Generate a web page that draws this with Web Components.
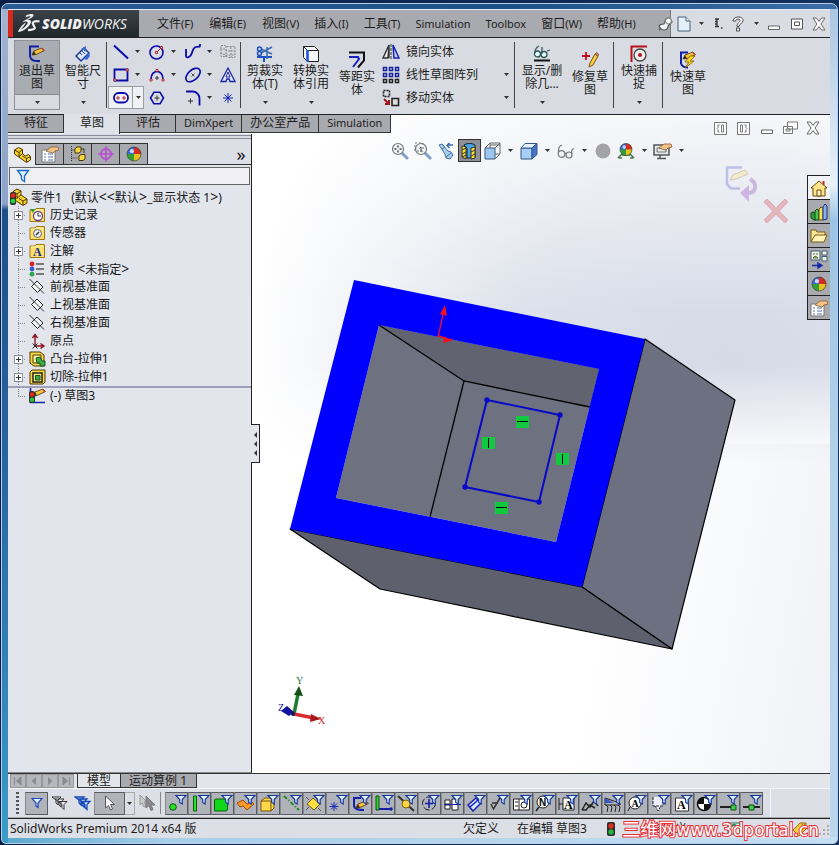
<!DOCTYPE html>
<html lang="zh-CN">
<head>
<meta charset="utf-8">
<title>SolidWorks Premium 2014</title>
<style>
html,body{margin:0;height:100%}
body{font:12px/14px "Noto Sans","Noto Sans CJK SC",sans-serif;color:#1c1c20;background:#0d2b57;overflow:hidden}
</style>
</head>
<body>
<sw-window></sw-window>
<script>
const BLUE = '#0a0aa8';
const funnel = '<path d="M9 1.500h10l-3.800 4v4.500l-2.500-1.500v-3z" fill="#e8f2ff" stroke="#14389c" stroke-width="1.200"/>';
const ball = (x, y, r) => `<circle cx="${x}" cy="${y}" r="${r}" fill="#30a030"/><path d="M${x} ${y}V${y-r}A${r} ${r} 0 0 0 ${x-r} ${y}z" fill="#3a64e0"/><path d="M${x} ${y}V${y-r}A${r} ${r} 0 0 1 ${x+r} ${y}z" fill="#d82a20"/><path d="M${x} ${y}V${y+r}A${r} ${r} 0 0 0 ${x+r} ${y}z" fill="#e8c020"/><circle cx="${x-r*.3}" cy="${y-r*.4}" r="${r*.3}" fill="#fff" opacity=".75"/><circle cx="${x}" cy="${y}" r="${r}" fill="none" stroke="#333" stroke-width=".6"/>`;
const plane = '<path d="M2.500 7.500L8 2l6 6-5.500 5.500z" fill="#f4f5f8" stroke="#222"/><path d="M.5 0L3.500 3M11.500 11l3.500 3.500M3.500 3l8 8" fill="none" stroke="#222" stroke-width=".9"/>';
const folder = '<path d="M1 3h5l1-1.500h8.500v13H1z" fill="#ffe06a" stroke="#a07810"/><path d="M2 4h4l1-1h7" stroke="#fff6b8" fill="none"/>';
const hand = '<path d="M5 6l5-4h7l1 3-4 1-2 2-4-1z" fill="#f2c48a" stroke="#8a5a28" stroke-width=".8"/>';
const pencil = (x, y) => `<g transform="translate(${x} ${y})"><path d="M0 7l2-4L10 0l2.500 2.500L4 6.500z" fill="#f6c93c" stroke="#5a3c10" stroke-width=".9"/><path d="M0 7l2-4 2 3.500z" fill="#3a2a18"/><path d="M10 0l2.500 2.500-1.200.8L9 .7z" fill="#d04840"/></g>`;
const sq = (x, y) => `<path d="M${x-1} ${y-1}h2v2h-2z" fill="#fff" stroke="#b01020" stroke-width=".9"/>`;
const glass = '<path d="M11 11l5 5" stroke="#7fa0cc" stroke-width="3" stroke-linecap="round"/><circle cx="7" cy="7" r="5.500" fill="#f3f4f6" stroke="#777" stroke-width="1.200"/>';
const ICONS = {
 ds:[24,24,'<path d="M9 3.500c4-2 8-2 7.500 0-.3 1.800-4 3.500-6 4.500 3-.3 4.500.8 3 3.500-2 4-7 8-12.500 8.500 1-3 4-7.500 8-9.500-1.500 3-4 6-5.500 7 4-1 7-5 7.200-7.200-1.200-1.600-4-.6-5.500.2 2-2.500 6-3.500 8.500-6-1.500-.4-3 .2-5 .9z" fill="#eee"/><path d="M22.500 9.500c-3.500-1.200-7.500.2-6.500 2.800.8 1.700 2.600 3 1.500 4.300-1.200 1.300-4.500 1.500-6.500 1.600" fill="none" stroke="#eee" stroke-width="2.200"/>'],
 pin:[16,16,'<path d="M2 14l4-4" stroke="#555" stroke-width="1.500"/><path d="M2 10c1-2 3-2 5-2l2-5c2-2 6 0 6 3l-4 4c0 3-2 4-4 4-3 0-4-2-5-4z" fill="#f4f4f6" stroke="#555" stroke-width="1.200"/><circle cx="11.500" cy="5" r="3" fill="#fff" stroke="#777"/>'],
 doc:[14,16,'<path d="M1 1h8l4 4v10H1z" fill="#e4f0fa" stroke="#45617c"/><path d="M9 1v4h4" fill="#fff" stroke="#45617c"/>'],
 more:[10,14,'<path d="M2 2h4M2 4.500h2M2 7h2M2 9.500h4M4 2v8M8 11h1.500" stroke="#333" stroke-width="1.300"/>'],
 help:[14,16,'<path d="M2 5c0-5 10-5.500 10-.5 0 3-4 3-4 6H6c0-4 3-4 3-6 0-2-4-2-4.200.5zM5.500 12h3v3h-3z" fill="#fff" stroke="#444"/>'],
 min:[14,14,'<path d="M1.500 9h11v3.500h-11z" fill="#fff" stroke="#666"/>'],
 max:[14,14,'<path d="M1.500 2h11v10h-11zM4.500 5h5v3.500h-5z" fill="#fff" stroke="#555"/>'],
 close:[14,14,'<path d="M1 1h3.500L7 4.500 9.500 1H13L9 7l4 6H9.500L7 9.500 4.500 13H1l4-6z" fill="#fff" stroke="#666"/>'],
 restore:[16,14,'<path d="M5.500 1h10v7h-10zM1.500 5.500h9v7h-9z" fill="#fff" stroke="#777"/><path d="M4 8h4v2H4z" fill="none" stroke="#777"/>'],
 paneL:[13,13,'<path d="M.5.500h12v12H.5zM7.500 3h2v7h-2z" fill="#fff" stroke="#777"/><path d="M5.500 3H4v2.500L3 6.500l1 1V10h1.500" fill="#fff" stroke="#777"/>'],
 paneR:[13,13,'<path d="M.5.500h12v12H.5zM3.500 3h2v7h-2z" fill="#fff" stroke="#777"/><path d="M7.500 3H9v2.500l1 1-1 1V10H7.500" fill="#fff" stroke="#777"/>'],
 exit:[18,18,'<path d="M11 1.500H2v10c1 3 3 4.500 6 4.500h4" fill="none" stroke="#1020a0" stroke-width="2"/>'+pencil(4,3)],
 dim:[18,18,'<path d="M2 11l8-8 5 5-8 8z" fill="#dbe6fa" stroke="#1c3c9c" stroke-width="1.500"/><path d="M6 8l2 2M8 6l3 3M10 5l1.500 1.500" stroke="#1c3c9c"/><path d="M7 4l5-3v4zM10 14l5-6 1 3-3 4z" fill="#3868d8"/>'],
 line:[16,16,`<path d="M1 1.500l14 13" stroke="${BLUE}" stroke-width="2"/>`],
 circle:[16,16,`<circle cx="7.500" cy="8.500" r="6.500" fill="none" stroke="${BLUE}" stroke-width="1.600"/><path d="M8 8l4-4" stroke="#b01020"/>${sq(7.500,8.500)}${sq(12.500,3.500)}`],
 spline:[18,18,`<path d="M2 6v7c0 2 3 2 5-1S8 5 12 4s4 1 4-3" fill="none" stroke="${BLUE}" stroke-width="1.800"/>`],
 grid:[18,16,'<path d="M2 1.500h4l1 1h9v11H9l-1-1H2zM1 5h5l2 2h8M1 9l6 2h9M7 2v11M12 3v10" fill="none" stroke="#888" stroke-dasharray="2 1"/>'],
 rect:[16,14,`<path d="M1.500 1.500h13v11h-13z" fill="none" stroke="${BLUE}" stroke-width="1.800"/>${sq(14,2)}${sq(2,12)}`],
 arc:[16,14,`<path d="M2 11c0-10 12-10 12 0" fill="none" stroke="${BLUE}" stroke-width="1.600"/>${sq(2,12)}${sq(14,12)}${sq(8,2.500)}<path d="M6 10h4M8 8v4" stroke="#333"/>`],
 ellipse:[18,16,`<ellipse cx="9" cy="8" rx="8.500" ry="5" transform="rotate(-42 9 8)" fill="none" stroke="${BLUE}" stroke-width="1.600"/><path d="M7.500 6.500l3 3M10.500 6.500l-3 3" stroke="#555"/>`],
 textA:[16,16,'<path d="M8 1l7 13.500h-5l-.8-2.500H6.800L6 14.500H1z" fill="#dde6fb" stroke="#1c28a4" stroke-width="1.300"/><path d="M8 5l2 5H6z" fill="#fff" stroke="#1c28a4"/>'],
 slot:[16,12,`<rect x="1" y="1" width="14" height="9.500" rx="4.500" fill="none" stroke="${BLUE}" stroke-width="1.800"/>${sq(5,6)}${sq(11,6)}`],
 hex:[16,14,`<path d="M5 1.200h6l3.500 5.800-3.500 5.800H5L1.500 7z" fill="none" stroke="${BLUE}" stroke-width="1.600"/><path d="M5.500 7h5M8 4.500v5" stroke="#333"/>`],
 fillet:[18,16,`<path d="M2 1.500h7c4 0 6.500 4 6.500 7v7" fill="none" stroke="${BLUE}" stroke-width="1.800"/><path d="M4 11h5M6.500 8.500v5" stroke="#333"/>`],
 star:[12,12,'<path d="M6 1v10M1 6h10M2.500 2.500l7 7M9.500 2.500l-7 7" stroke="#1420b0"/>'],
 trim:[18,18,'<path d="M1 12h15M8 12v5" stroke="#1c50c0" stroke-width="2"/><path d="M5 8l11-6M5 4l11 5M11 2v12" stroke="#3a6ab0" stroke-width="1.500"/><circle cx="3.500" cy="4" r="2" fill="none" stroke="#1c50c0" stroke-width="1.500"/><circle cx="3.500" cy="8.500" r="2" fill="none" stroke="#1c50c0" stroke-width="1.500"/>'],
 convert:[18,18,'<path d="M1.500 1.500h11l4 4v11h-11l-4-4zM5.500 5.500h11M1.500 1.500l4 4" fill="#f5f7fb" stroke="#222"/><path d="M5.500 5v11.500" stroke="#1c50e0" stroke-width="2.500"/>'],
 offset:[18,18,'<path d="M1 1.500h15v8l-6 7" fill="none" stroke="#111" stroke-width="2"/><path d="M1 6h9l1 2-6 8" fill="none" stroke="#1420c0" stroke-width="2"/>'],
 mirror:[18,16,'<path d="M7 1L1 14h5zM7 1v13" fill="#eee" stroke="#333" stroke-width="1.400"/><path d="M11 1l6 13h-5z" fill="#c9d4ff" stroke="#1420b0" stroke-width="1.500"/><path d="M9 0v16" stroke="#333" stroke-dasharray="3 1"/>'],
 pattern:[18,18,[0,1,2].map(r=>[0,1,2].map(c=>`<path d="M${1.500+c*6} ${1.500+r*6}h3v3h-3z" fill="#dce2f4" stroke="${r<2?'#1420a0':'#222'}" stroke-width="1.500"/>`).join('')).join('')],
 move:[18,18,'<path d="M1.500 1.500h6v6h-6z" fill="none" stroke="#222" stroke-width="1.600" stroke-dasharray="2 1"/><path d="M2 10l5 5M7 11v4H3" stroke="#a01818" stroke-width="2" fill="none"/><path d="M10 9.500h6.500v7H10z" fill="#ddd" stroke="#222" stroke-width="1.600"/>'],
 show:[18,18,'<circle cx="4.500" cy="9" r="3" fill="#dff" stroke="#355" stroke-width="1.300"/><circle cx="11" cy="9.500" r="3" fill="#dff" stroke="#355" stroke-width="1.300"/><path d="M2 8c0-4 2-6 4-7M9 2v7M14 6l3-1" stroke="#355" fill="none" stroke-width="1.300"/><path d="M1 15.500h16" stroke="#111" stroke-width="2"/>'],
 repair:[18,18,'<path d="M1 5h8M5 1v8" stroke="#c01020" stroke-width="1.800"/><path d="M8 16l1-4 5-9 3 2-5 9z" fill="#f8d040" stroke="#7a5010"/><path d="M14 3l3 2 .5-2-2-1.500z" fill="#e08080" stroke="#7a5010" stroke-width=".7"/>'],
 snap:[18,18,'<path d="M1.500 17V1.500H17" fill="none" stroke="#b81018" stroke-width="2"/><circle cx="10" cy="10" r="6" fill="#eee" stroke="#444" stroke-width="1.300"/><circle cx="10" cy="10" r="2" fill="#c01020"/>'],
 rapid:[18,18,'<path d="M9 1.500H2v11c1 3 4 4 7 4" fill="none" stroke="#1020a0" stroke-width="2"/>'+pencil(4,1)+'<path d="M11 5l-5 6h4l-4 6 9-7h-4l5-5z" fill="#ffd820" stroke="#7a5a00" stroke-width=".8"/>'],
 part:[18,18,'<path d="M1.500 4l4-2.500 4 2v4.500l3 2 3-1.500 2 2v3.500l-4 2.500L1.500 8z" fill="#f8d030" stroke="#4a3800"/><path d="M1.500 4l4.500 2.500 3.500-3M6 6.500V11M9 8l-3 2.500M13.500 16v-3.500l4-2M13.500 12.500L9.500 10" fill="none" stroke="#4a3800"/>'],
 prop:[18,18,'<path d="M1 5h13v12H1z" fill="#fff" stroke="#777"/><path d="M3 9h2M7 9h5M3 12h2M7 12h5M3 15h2M7 15h5" stroke="#5070b0"/>'+hand],
 config:[18,18,'<path d="M2.500 1v16M2.500 5H7M2.500 13H9" stroke="#333" fill="none" stroke-dasharray="1 1"/><path d="M6 3.500L8 2h4v4.500L10 8H6zM10 11l2-1.500h4V14l-2 1.500h-4z" fill="#f8d840" stroke="#4a3800"/><path d="M12 4h3v4" fill="none" stroke="#333"/>'],
 target:[18,18,'<circle cx="9" cy="9" r="5" fill="none" stroke="#b850d0" stroke-width="2"/><path d="M9 1v16M1 9h16" stroke="#b850d0" stroke-width="1.600"/>'],
 ball:[18,18,ball(9,9,7)],
 funnel:[14,14,'<path d="M1.500 1.500h11L8.500 7v5.500l-3-2V7z" fill="#d9efff" stroke="#1668c8" stroke-width="1.300"/>'],
 funnelS:[12,12,'<path d="M1 1.500h10L7 6v4.500L5 9V6z" fill="#e4eeff" stroke="#1c48b8" stroke-width="1.200"/>'],
 root:[18,18,'<path d="M3 3.500L7 1l4 2v4l3 2 3 2v4l-4 2.500-9-6z" fill="#f8d030" stroke="#4a3800"/><path d="M3 3.500L7 6l4-3M7 6v5M11 7l-4 3M13 17v-4l4-2M13 13L9 10.500" fill="none" stroke="#4a3800"/><rect x="0" y="4" width="6" height="13" rx="2" fill="#333"/><circle cx="3" cy="7.500" r="2.300" fill="#f02818"/><circle cx="3" cy="13" r="2.300" fill="#20d838"/>'],
 history:[17,16,folder+'<circle cx="9" cy="9" r="4.500" fill="#fff" stroke="#6a4090" stroke-width="1.300"/><path d="M9 6v3h3" stroke="#333" fill="none"/><path d="M1 2h5L4 6z" fill="#28a030"/>'],
 sensor:[17,16,folder+'<circle cx="8.500" cy="8.500" r="4" fill="#eef" stroke="#666"/><path d="M7 10l3-3" stroke="#333" stroke-width="1.400"/>'],
 note:[17,16,folder+'<text x="4" y="13" font-size="12" font-weight="700" font-family="Liberation Serif" fill="#14309c">A</text>'],
 material:[17,16,'<path d="M7 3h8M7 8h8M7 13h8" stroke="#555" stroke-width="1.600"/><circle cx="3" cy="3" r="2.400" fill="#d82028"/><circle cx="3" cy="8" r="2.400" fill="#3858d0"/><circle cx="3" cy="13.200" r="2.400" fill="#28a848"/>'],
 plane:[17,16,plane],
 origin:[17,16,'<path d="M6 13V2M3.500 5L6 1.500 8.500 5M6 13h8M11.500 10.500L15 13l-3.500 2.500" stroke="#8c1420" stroke-width="1.400" fill="none"/><path d="M3.500 10.500l5 5M8.500 10.500l-5 5" stroke="#222"/>'],
 boss:[17,16,'<path d="M1 1h10l4 3v11H5l-4-3z" fill="#f8d848" stroke="#4a3800"/><path d="M4 4h8v8H4z" fill="#fff2a0" stroke="#4a3800"/><path d="M7 7l4-1 2 4h3v5h-5v-3H8z" fill="#3cb048" stroke="#145020"/>'],
 cut:[17,16,'<path d="M1 3l2-2h13v12l-2 2H1z" fill="#f8d848" stroke="#4a3800"/><path d="M4 4h9v9H4z" fill="#ffe880" stroke="#222" stroke-width="1.500"/><path d="M6.500 6.500h4.500V11H6.500z" fill="#3cb048" stroke="#145020"/>'],
 sketch3:[17,16,'<path d="M1.500 0v14.500H16" stroke="#1428a8" stroke-width="1.600" fill="none"/>'+pencil(4,1)+'<rect x="0" y="3" width="6" height="12" rx="2" fill="#333"/><circle cx="3" cy="6.500" r="2.200" fill="#e82818"/><circle cx="3" cy="11.700" r="2.200" fill="#20c838"/>'],
 zoomFit:[18,18,glass+'<path d="M7 3.500v2M7 8.500v2M3.500 7h2M8.500 7h2" stroke="#444" stroke-width="1.500"/>'],
 zoomArea:[18,18,glass+'<path d="M1 1h8v8H1z" fill="none" stroke="#777" stroke-dasharray="2 2"/><path d="M7 5v5M5.500 6.500L7 5" stroke="#444" fill="none"/>'],
 prev:[18,18,'<path d="M2 3l3-1 6 7 3 1 2 3-3 4-4-1-1-4z" fill="#a8cfee" stroke="#4070a0"/><path d="M5 7l3-2M9 15l5-4" stroke="#4070a0"/><path d="M16 3h-6M12.500 1L10 3.500 12.500 6" stroke="#3868b0" stroke-width="1.500" fill="none"/>'],
 section:[18,18,'<path d="M4 3c3-2 8-2 11 0v12c-2-2-3-1-3 1H7V6z" fill="#4aa4e0" stroke="#123"/><path d="M2 4l4 1v12l-4-2zM11 6l4-1v11l-4 1z" fill="#ffe030" stroke="#333"/><path d="M2 8l4-2M2 12l4-2M2 15l4-2M11 10l4-2M11 14l4-2" stroke="#333"/>'],
 orient:[18,18,'<path d="M2 6h10v11H2z" fill="#9cc8f0" stroke="#3a5a80"/><path d="M2 6l5-5h10v11l-5 5M7 1v5M12 6l5-5M12 12h5M7 3h10" fill="none" stroke="#666"/>'],
 style:[18,18,'<path d="M1 6h11v11H1z" fill="#a8d0f6" stroke="#35558a"/><path d="M1 6l4-4.500h12L12 6z" fill="#e4f2ff" stroke="#35558a"/><path d="M17 1.500v11L12 17V6z" fill="#4a72c8" stroke="#35558a"/>'],
 glasses:[18,18,'<circle cx="4.500" cy="12" r="3.300" fill="#eef4f8" stroke="#777" stroke-width="1.200"/><circle cx="12" cy="13" r="3" fill="#eef4f8" stroke="#777" stroke-width="1.200"/><path d="M1.500 10C1 6 3 3 5 3.500M8 11l1 1M15 12c-1-3 0-5 2-5.500" fill="none" stroke="#777" stroke-width="1.200"/>'],
 grey:[18,18,'<circle cx="9" cy="9" r="7.500" fill="#a4a4a8"/>'],
 scene:[18,18,'<path d="M1 16l4-4M17 16l-4-4M5 13h8M2 16h3M13 16h3" stroke="#4a7a4a" stroke-width="1.600"/>'+ball(9,7.500,6)],
 view:[20,18,'<path d="M1 3h15v10H1z" fill="#e4e8ee" stroke="#555" stroke-width="1.500"/><path d="M4 6h9v4H4z" fill="none" stroke="#777"/><path d="M7 13v3M4 16.500h9" stroke="#555" stroke-width="1.500"/><g transform="translate(1 0)">'+hand+'</g>'],
 home:[18,18,'<path d="M1 9l8-7 8 7h-2v8H3V9z" fill="#ffe68a" stroke="#6a4a08"/><path d="M7 11h4v6H7z" fill="#fff6c8" stroke="#6a4a08"/><path d="M12.500 2v3l2 1.500V2z" fill="#c03020"/>'],
 lib:[18,18,'<path d="M1 10l2-1 3 1v7H4l-3-2z" fill="#2c9c34" stroke="#124a18"/><path d="M5 8l2-2 2 2v9H5z" fill="#4cc054" stroke="#124a18"/><path d="M9 6l2-2 2 1v12H9z" fill="#f8e060" stroke="#5a4808"/><path d="M13 4l2-3 2 2v13l-4 1z" fill="#8ab0ee" stroke="#1a3478"/>'],
 open:[18,18,'<path d="M1 15V3h5l1 2h8v3" fill="#ffe89a" stroke="#7a5a10"/><path d="M1 15l4-7h12l-3 7z" fill="#fff3b8" stroke="#7a5a10"/>'],
 palette:[18,20,'<path d="M1 1h9v9H1zM12 1h5v4h-5zM12 6.500h5V11h-5z" fill="#eef6e0" stroke="#445c80"/><path d="M3 4h2M6 4h2M3 8l2-2 3 2z" stroke="#487040" fill="#d8d040"/><path d="M2 15.500h6M8 13l4 2.500L8 18z" stroke="#1428a8" stroke-width="1.400" fill="#1428a8"/>'],
 confirm:[34,40,'<path d="M18 2.500H3v17l4 4h9" fill="none" stroke="#bcc0e6" stroke-width="2.500"/><path d="M6 15l3-5 12-5 3 4-12 5z" fill="#f4ebc8" stroke="#cfc8c0"/><path d="M26 14c7 4 7 13-1 14" stroke="#c8b8e0" stroke-width="4" fill="none"/><path d="M16 28l9-8v17z" fill="#d0b4e4"/>'],
 cancel:[24,24,'<path d="M3 3l18 18M21 3L3 21" stroke="#dba9b2" stroke-width="5" stroke-linecap="square"/><path d="M3 3l18 18M21 3L3 21" stroke="#e4b8be" stroke-width="3" stroke-linecap="square"/>'],
 first:[16,14,'<path d="M4.500 3v8M11 3L6.500 7l4.500 4z" fill="#8a8b90" stroke="#8a8b90"/>'],
 prior:[16,14,'<path d="M10 3L5.500 7l4.500 4z" fill="#8a8b90"/>'],
 next:[16,14,'<path d="M6 3l4.500 4L6 11z" fill="#8a8b90"/>'],
 last:[16,14,'<path d="M11.500 3v8M5 3l4.500 4L5 11z" fill="#8a8b90" stroke="#8a8b90"/>'],
 funnels:[18,16,'<path d="M1 2h9L7 5v5L5 8V5zM4 4h9l-3 3v5l-2-2V7zM7 6.500h9l-3 3v5l-2-2v-3z" fill="#f4f4f4" stroke="#333"/>'],
 funnelsB:[18,16,'<path d="M1 2h9L7 5v5L5 8V5zM4 4h9l-3 3v5l-2-2V7zM7 6.500h9l-3 3v5l-2-2v-3z" fill="#d4e8ff" stroke="#1448b8" stroke-width="1.300"/>'],
 cursor:[12,16,'<path d="M1.500 1v12l3-2.500 2 4.500 2-1-2-4.500h4z" fill="#fff" stroke="#555"/>'],
 cursorG:[18,18,'<path d="M2 1v10l2-2 2 4 2-1-2-4h3z" fill="#ccc" stroke="#999"/><path d="M8 2v12l3-2.500 2 5 2-1-2-4.500h4z" fill="#888a90" stroke="#777"/>'],
 light:[12,14,'<rect x="2" y="0" width="8" height="14" rx="2" fill="#2c2c2c"/><circle cx="6" cy="4" r="2.700" fill="#d83020"/><circle cx="6" cy="10" r="2.700" fill="#28b040"/>'],
 ask:[14,14,'<path d="M1 1h12v11H1z" fill="#d8f4e0" stroke="#1c6a50"/><path d="M5 5c0-3 4-3 4-.5C9 6 7 6 7 8M7 9.500v1.500" stroke="#18704c" stroke-width="1.500" fill="none"/>'],
 tag:[16,16,'<path d="M1 9l7-7h6v6l-7 7z" fill="#f8cc38" stroke="#9a7010"/><circle cx="11.500" cy="4.500" r="1.500" fill="#fff" stroke="#9a7010"/>'],
 size:[12,12,'<path d="M9 2h2v2H9zM9 6h2v2H9zM9 10h2v2H9zM5 6h2v2H5zM5 10h2v2H5zM1 10h2v2H1z" fill="#aaadb5"/>'],
};
const FILTERS = [
 ['顶点','<circle cx="6" cy="13" r="3.300" fill="#28e028" stroke="#0a5a0a"/>'],
 ['边线','<path d="M3.500 2h3v15h-3z" fill="#30e030" stroke="#0a5a0a"/>'],
 ['面','<path d="M1.500 6l1-1h12v10l-1 2h-12z" fill="#10d818" stroke="#0a600a"/>'],
 ['曲面','<path d="M1 9l6-3 4 4 5-2 2 2-7 6-4-4-3 1z" fill="#f89828" stroke="#a04808"/>'],
 ['实体','<path d="M2 7l4-3h9v10l-3 3H2z" fill="#ffd84a" stroke="#7a5008"/><path d="M2 7h10v10M12 7l3-3" fill="none" stroke="#7a5008"/>'],
 ['基准轴','<path d="M2 2l15 14" stroke="#1c8a28" stroke-width="2" stroke-dasharray="4 2 1 2"/>'],
 ['基准面','<path d="M2 10l6-6 7 6-6 6z" fill="#ffe040" stroke="#6a5808"/><path d="M1 3l3 3M13 14l3 3M1 16l3-3" stroke="#555"/>'],
 ['草图点','<path d="M6 8v9M1.500 12.500h9M3 9.500l6 6M9 9.500l-6 6" stroke="#1828b8"/>'],
 ['草图','<path d="M10 4H3v8c1 4 6 4 10 4" stroke="#1420a8" stroke-width="2" fill="none"/>'+pencil(5,7)],
 ['草图线段','<path d="M2 2h3v14H2z" fill="#30d030" stroke="#0a500a"/><path d="M5 15h12" stroke="#1420a8" stroke-width="2"/><circle cx="17" cy="15" r="1.800" fill="#1420a8"/>'],
 ['中点','<path d="M1 2l16 15" stroke="#333" stroke-width="2"/><circle cx="9" cy="10" r="4" fill="#ffd840" stroke="#806008"/>'],
 ['中心符号','<circle cx="9" cy="9.500" r="6.500" fill="none" stroke="#222" stroke-dasharray="7 2"/><path d="M5 9.500h8M9 5v9" stroke="#1420a8" stroke-width="1.600"/>'],
 ['中心线','<path d="M2 6h5v4H2zM2 11h5v4H2zM9 5h6v11H9z" fill="#fff" stroke="#222"/><path d="M1 10.500h17" stroke="#1420a8"/>'],
 ['尺寸','<path d="M2 11l8-7 5 5-8 8z" fill="#d8e4ff" stroke="#1420b0" stroke-width="1.500"/><path d="M4 13l8-7" stroke="#1420d0" stroke-width="1.600"/>'],
 ['表面粗糙度','<path d="M2 10l2.500 5L11 4M3 9h6" stroke="#333" stroke-width="1.500" fill="none"/>'],
 ['形位公差','<path d="M1.500 5h16v11h-16zM7 5v11" fill="#fff" stroke="#222"/><path d="M3 8h3M3 12h3" stroke="#222"/><circle cx="12" cy="11" r="3" fill="none" stroke="#222"/>'],
 ['注释','<circle cx="8" cy="8" r="6" fill="#fff" stroke="#222"/><path d="M4 13l-3 4" stroke="#222" stroke-width="1.500"/><text x="4" y="12" font-size="10" font-weight="700" font-family="Liberation Sans">N</text>'],
 ['基准特征','<path d="M5 4h11v12H5zM1 4v12M1 10h4" fill="#fff" stroke="#222"/><text x="6" y="14.500" font-size="12" font-weight="700" font-family="Liberation Serif">A</text>'],
 ['焊接','<path d="M1 16L5 9l4 4 4-6 4 5M1 16h4l4-5 5 3" stroke="#222" stroke-width="1.500" fill="none"/>'],
 ['毛虫','<path d="M1 4l15 5v2H1zM2 11l2 2-1 5M6 11l2 2-1 5M10 11l2 2-1 5M14 11l2 2-1 5" stroke="#222" fill="none"/><path d="M1 4l9 5H1z" fill="#3858c0"/>'],
 ['基准目标','<circle cx="8" cy="9" r="6" fill="#fff" stroke="#222"/><text x="4.500" y="13" font-size="10" font-weight="700" font-family="Liberation Serif">A</text><path d="M3 13l-2 4" stroke="#222"/>'],
 ['装饰螺纹线','<path d="M3 3v9h1l4 5 4-5h1V3" fill="#eef"/><path d="M3 3v9h10V3M5 12l3 5 3-5" stroke="#222" stroke-dasharray="3 1" fill="none"/>'],
 ['块','<path d="M2.500 4h13v13h-13z" fill="#fff" stroke="#333"/><text x="4" y="15" font-size="12" font-weight="700" font-family="Liberation Serif">A</text>'],
 ['销钉符号','<circle cx="8" cy="10" r="6.500" fill="#fff" stroke="#111" stroke-width="1.500"/><path d="M8 10V3.500a6.500 6.500 0 0 0-6.500 6.500zM8 10v6.500a6.500 6.500 0 0 0 6.500-6.500z" fill="#111"/>'],
 ['连接点','<path d="M1 13h12" stroke="#111" stroke-width="1.800"/><path d="M12 11h5v5h-5z" fill="#40d050" stroke="#0a500a"/>'],
 ['步路点','<path d="M1 13h17" stroke="#111" stroke-width="1.800"/><path d="M7 11h5v5H7z" fill="#40d050" stroke="#0a500a"/>'],
];
FILTERS.forEach((f, i) => { ICONS['f' + i] = [20, 18, f[1] + funnel]; });

const RESET = '<style>*,:host{box-sizing:border-box}:host{display:block;flex-shrink:0}button{font:inherit;color:inherit;background:none;border:0;padding:0;margin:0;display:flex;align-items:center;justify-content:center}.latin{font-size:11px}</style>';
const define = (tag, html) => customElements.define(tag, class extends HTMLElement {
  connectedCallback() {
    if (this.shadowRoot) return;
    const t = document.createElement('template');
    t.innerHTML = RESET + (typeof html === 'function' ? html(this) : html);
    this.attachShadow({mode: 'open'}).append(t.content.cloneNode(true));
  }
});
const ic = n => `<sw-icon name="${n}"></sw-icon>`;
const btn = (n, label, cls = '') => `<button type="button" class="${cls}" aria-label="${label}">${ic(n)}</button>`;
const arrow = (label = '更多') => `<button type="button" class="arrow" aria-label="${label}"><sw-arrow></sw-arrow></button>`;

define('sw-icon', el => {
  const [w, h, body] = ICONS[el.getAttribute('name')];
  return `<style>svg{display:block}</style><svg width="${w}" height="${h}" viewBox="0 0 ${w} ${h}" aria-hidden="true">${body}</svg>`;
});
define('sw-arrow', '<style>svg{display:block}</style><svg width="5" height="3" aria-hidden="true"><path d="M0 0h5L2.500 3z" fill="#333"/></svg>');

define('sw-menubar', `<style>
:host{display:flex;height:28px;border-bottom:1px solid #222;background:#d9dce3}
.logo{display:flex;align-items:center;width:131px;background:linear-gradient(#3b4349,#20272c);border-left:5px solid #d8281e;color:#f2f2f2;font:italic 14px/18px "Open Sans","Noto Sans",sans-serif;padding-left:4px;gap:1px;white-space:nowrap}
.logo b{font-weight:800}
.menus{display:flex;flex:1;align-items:center;padding-left:10px;background:#a9aaaf;border-right:1px solid #777;max-width:532px;white-space:nowrap}
.menus button{height:26px;padding:0 8px}
.menus button:nth-child(n+4){padding-left:7px}
.menus .pin{padding:0;margin-left:6px}
.tools{display:flex;flex:1;align-items:center;justify-content:space-between;padding:0 4px 0 6px}
</style>
<div class="logo">${ic('ds')}<span><b>SOLID</b>WORKS</span></div>
<nav class="menus">${['文件(F)','编辑(E)','视图(V)','插入(I)','工具(T)','Simulation','Toolbox','窗口(W)','帮助(H)'].map(m=>`<button type="button"><span>${m.replace(/[A-Za-z()]+/,'<span class="latin">$&</span>')}</span></button>`).join('')}${btn('pin','固定','pin')}</nav>
<div class="tools">${btn('doc','新建')}${arrow()}${btn('more','选项')}${btn('help','帮助')}${arrow()}${btn('min','最小化')}${btn('max','最大化')}${btn('close','关闭')}</div>`);

define('sw-big', el => `<style>
:host{width:46px;height:70px;flex:none}
.box{display:flex;flex-direction:column;height:70px;border:1px solid transparent}
.main{flex:1;flex-direction:column;justify-content:flex-start;padding-top:4px;line-height:13px}
:host([low]) .main{padding-top:10px}
.lbl{margin-top:1px;width:42px;text-align:center}
.arrow{height:14px}
:host([on]) .box{border-color:#8d9096}
:host([on]) .main{background:#a9acb2;border-bottom:1px solid #888}
</style><div class="box"><button type="button" class="main">${ic(el.getAttribute('icon'))}<span class="lbl"><slot></slot></span></button>${el.hasAttribute('low')?'':arrow()}</div>`);

const tools = [['line','直线',1],['circle','圆',1],['spline','样条曲线',1],['grid','基准面',0],['rect','边角矩形',1],['arc','圆弧',1],['ellipse','椭圆',1],['textA','文字',0],['slot','直槽口',1],['hex','多边形',0],['fillet','圆角',1],['star','点',0]];
define('sw-ribbon', `<style>
:host{display:flex;height:77px;border-bottom:1px solid #222;padding:2px 0 0 6px;background:#d8dbe2}
.sep{width:1px;height:66px;margin-top:2px;background:#444;flex:none}
.grid{display:grid;grid-template-columns:36px 36px 36px 24px;grid-auto-rows:23px;padding:0 0 0 1px}
.cell{display:flex;border:1px solid transparent}
.cell>button:first-child{width:23px}
.cell .arrow{flex:1}
.cell.on{border-color:#9a9da4;background:#f0f1f4}
.cell.on .arrow{border-left:1px solid #9a9da4}
.list{display:grid;grid-auto-rows:23px;width:133px;white-space:nowrap}
.row{display:flex;justify-content:space-between}
.row>button:first-child{gap:6px;padding-left:1px}
.row .arrow{width:15px}
.g{padding:0 1px;display:flex}
.g2{padding:0 0 0 4px;display:flex;gap:2px}
.g3{padding:0 0 0 2px;display:flex}
</style>
<sw-big icon="exit" on>退出草图</sw-big><sw-big icon="dim">智能尺寸</sw-big><i class="sep"></i>
<div class="grid">${tools.map(t=>`<div class="cell ${t[0]==='slot'?'on':''}">${btn(t[0],t[1])}${t[2]?arrow():''}</div>`).join('')}</div>
<i class="sep"></i><div class="g"><sw-big icon="trim">剪裁实体(T)</sw-big><sw-big icon="convert">转换实体引用</sw-big><sw-big icon="offset" low>等距实体</sw-big></div>
<div class="list"><div class="row"><button type="button">${ic('mirror')}镜向实体</button></div><div class="row"><button type="button">${ic('pattern')}线性草图阵列</button>${arrow()}</div><div class="row"><button type="button">${ic('move')}移动实体</button>${arrow()}</div></div>
<i class="sep"></i><div class="g2"><sw-big icon="show">显示/删除几...</sw-big><sw-big icon="repair" low>修复草图</sw-big></div>
<i class="sep"></i><div class="g3"><sw-big icon="snap">快速捕捉</sw-big></div><i class="sep"></i><div class="g3"><sw-big icon="rapid" low>快速草图</sw-big></div>`);

define('sw-tabs', `<style>
:host{display:flex;height:19px}
button{height:18px;background:#a9aaaf;border:1px solid #333;border-width:0 1px 1px 0;padding:0 8px 2px;white-space:nowrap;line-height:14px}
.w{padding:0 15px 2px 16px}
.on{background:#dfe2e8;border-width:0 1px 0 0;height:20px;margin-top:-1px}
</style>${['特征','草图','评估','DimXpert','办公室产品','Simulation'].map((t,i)=>`<button type="button" class="${i<3?'w ':''}${i===1?'on ':''}${/^[A-Z]/.test(t)?'latin':''}">${t}</button>`).join('')}`);

const nodes = [['history','历史记录',1],['sensor','传感器',0],['note','注解',1],['material','材质 <未指定>',0],['plane','前视基准面',0],['plane','上视基准面',0],['plane','右视基准面',0],['origin','原点',0],['boss','凸台-拉伸1',1],['cut','切除-拉伸1',1],['sketch3','(-) 草图3',0]];
const esc = s => s.replace(/[<>]/g, c => `<b>${c === '<' ? '&lt;' : '&gt;'}</b>`);
define('sw-panel', `<style>
:host{display:flex;flex-direction:column;width:244px;background:#e2e5eb;border-right:1px solid #222;border-bottom:1px solid #888;color:#151518}
.tabs{display:flex;height:31px;padding-top:9px;border-bottom:1px solid #333;background:linear-gradient(#d8dbe2 1px,#8a8c9a 1px 2px,#d8dbe2 2px 4px,#8a8c9a 4px 5px,#dcdfe5 5px)}
.tabs button{width:28px;height:21px;background:#a9aaaf;border:1px solid #333;border-width:1px 1px 0 0}
.tabs .on{background:#e8eaee;height:22px}
.tabs .more{margin-left:auto;width:20px;border:0;background:none;font-size:18px;line-height:18px}
.filter{display:flex;align-items:center;height:18px;margin:2px 1px 0;border:1px solid #666;background:#f0f0f2;padding-left:6px}
.filter input{flex:1;border:0;background:none;height:14px;outline:0;min-width:0;font:inherit}
ul{list-style:none;margin:3px 0 0;padding:0;white-space:nowrap}
li{display:flex;align-items:center;height:18px}
li b{font-weight:400;font-size:14px;line-height:14px}
.root{padding-left:2px;gap:3px}
.kid{padding-left:6px;gap:4px}
.twig{width:11px;height:18px;display:flex;align-items:center;background:repeating-linear-gradient(#888 0 1px,#fff0 1px 2px) 4px 0/1px 18px no-repeat,repeating-linear-gradient(90deg,#888 0 1px,#fff0 1px 2px) 4px 9px/9px 1px no-repeat}
.last .twig{background-size:1px 9px,9px 1px}
.plus{width:9px;height:9px;border:1px solid #8c8f98;background:linear-gradient(#333,#333) 1px 3px/5px 1px no-repeat,linear-gradient(#333,#333) 3px 1px/1px 5px no-repeat,#fff}
.last{border-top:2px solid #a0a0b8}
</style>
<div class="tabs">${btn('part','特征树','on')}${btn('prop','属性')}${btn('config','配置')}${btn('target','尺寸专家')}${btn('ball','外观')}<button type="button" class="more" aria-label="展开">»</button></div>
<label class="filter">${ic('funnel')}<input type="text" aria-label="过滤"></label>
<ul><li class="root">${ic('root')}<span>零件1&nbsp;&nbsp; (默认${esc('<<')}默认${esc('>')}_显示状态 1${esc('>')})</span></li>
${nodes.map((n,i)=>`<li class="kid ${i===10?'last':''}"><span class="twig">${n[2]?`<button type="button" class="plus" aria-label="展开${n[1]}"></button>`:''}</span>${ic(n[0])}<span>${esc(n[1])}</span></li>`).join('')}</ul>`);

define('sw-scene', `<style>svg{display:block;width:100%;height:100%}</style>
<svg viewBox="8 115 822 658" preserveAspectRatio="xMinYMin meet" role="img" aria-label="零件模型">
<g stroke="#000" stroke-width="1.200" stroke-linejoin="round">
<path d="M645 339l90 61-63 249-90-62z" fill="#6c7080"/><path d="M290 529l292 58 90 62-292-60z" fill="#5e616d"/></g>
<path d="M379 325l220 44-43 173-220-44z" fill="#6e7180"/><path d="M379 325l220 44-9 38-126-26z" fill="#616470"/>
<path d="M379 325l85 56 126 26M464 381l-34 136" fill="none" stroke="#000" stroke-width="1.300"/>
<path d="M354 280l291 59-63 248-292-58zM379 325l-43 173 220 44 43-173z" fill="#00f" fill-rule="evenodd"/>
<path d="M487 400l73 15-21 87-74-15z" fill="none" stroke="#0808c8" stroke-width="2"/>
<g fill="#0808c8"><circle cx="487" cy="400" r="2.700"/><circle cx="560" cy="415" r="2.700"/><circle cx="539" cy="502" r="2.700"/><circle cx="465" cy="487" r="2.700"/></g>
<path d="M516 416h13v12h-13zM482 437h13v12h-13zM556 453h13v12h-13zM495 502h13v12h-13z" fill="#12c840"/>
<path d="M517 421.500h11M488.500 438v10M562.500 454v10M496 507.500h11" stroke="#000"/>
<path d="M438 337l5-22M438 336l8 2" stroke="#f01020" stroke-width="1.300"/><path d="M445 305l2 11-7-2zM454 340l-10-3-1 6z" fill="#f01020"/>
<path d="M294 714l4-20" stroke="#1e7a2c" stroke-width="3.500"/><path d="M299 686l4 10-9-1z" fill="#125018"/>
<path d="M294 714l20 4" stroke="#d82c30" stroke-width="3.500"/><path d="M321 719l-10-5-1 8z" fill="#a81820"/>
<path d="M281 711l6-5 7 6-5 4z" fill="#10109c"/><circle cx="293" cy="714" r="2" fill="#081860"/>
<g font-family="Liberation Serif" font-size="10"><text x="296" y="684" fill="#1e7a2c">Y</text><text x="318" y="724" fill="#d02028">X</text><text x="278" y="711" fill="#10109c">Z</text></g>
</svg>`);

define('sw-viewport', `<style>
:host{display:flex;flex-direction:column;min-width:0}
.hud{display:flex;justify-content:center;padding:5px 5px 0 0;height:28px}
.hud button{width:23px;height:23px}
.hud .arrow{width:14px}
.hud .on{background:#8e9096;border:1px solid #333}
.side{display:flex;justify-content:flex-end;align-items:flex-start;margin-top:1px}
.cf{margin-top:2px}.cx{margin:36px 19px 0 6px}
.pane{margin-top:12px;border:1px solid #222;border-width:1px 0 0 1px}
.pane button{width:22px;height:24px;background:#a9aaaf;border-bottom:1px solid #222}
.pane button:first-child{background:#f2f3f6}
.mid{display:flex;flex:1}
.handle{width:9px;height:39px;margin:104px 0 0 -1px;background:#e2e5eb;border:1px solid #222;border-left:0;flex-direction:column;gap:3px}
.handle i{border:3px solid transparent;border-right:3px solid #333;border-left:0;height:0;width:3px}
</style>
<div class="hud">${btn('zoomFit','整屏显示全图')}${btn('zoomArea','局部放大')}${btn('prev','上一视图')}${btn('section','剖面视图','on')}${btn('orient','视图定向')}${arrow()}${btn('style','显示样式')}${arrow()}${btn('glasses','隐藏/显示项目')}${arrow()}${btn('grey','编辑外观')}${btn('scene','应用布景')}${arrow()}${btn('view','视图设定')}${arrow()}</div>
<div class="side">${btn('confirm','确认','cf')}${btn('cancel','取消','cx')}<div class="pane">${btn('home','资源')}${btn('lib','设计库')}${btn('open','文件探索器')}${btn('palette','视图调色板')}${btn('ball','外观')}${btn('prop','自定义属性')}</div></div>
<div class="mid"><button type="button" class="handle" aria-label="收起"><i></i><i></i><i></i></button></div>`);

define('sw-work', `<style>
:host{display:grid;grid-template:19px 1fr/244px 1fr;flex:1 1 0;min-height:0;background:linear-gradient(100deg,#fff0 70%,#eceef4 110%) 0 100%/100% 50% no-repeat,linear-gradient(#fff0 38%,#fff 53%),linear-gradient(#fffa,#fff0 30%),radial-gradient(ellipse 480px 460px at 720px 250px,#d6dae7,#dde1eb 45%,#fff0),#fff}
sw-scene{grid-area:1/1/3/3;min-height:0}
.top{grid-area:1/1/2/3;display:flex;justify-content:space-between}
.win{display:flex;padding:2px 6px 0 0;height:24px}
.win button{width:23px;height:22px}
sw-panel{grid-area:2/1}sw-viewport{grid-area:2/2}
</style><sw-scene></sw-scene><div class="top"><sw-tabs></sw-tabs><div class="win">${btn('paneL','左窗格')}${btn('paneR','右窗格')}${btn('min','最小化文档')}${btn('restore','还原文档')}${btn('close','关闭文档')}</div></div><sw-panel></sw-panel><sw-viewport></sw-viewport>`);

define('sw-bottom', `<style>
:host{background:#dcdfe5}
.tabs{display:flex;height:15px;border-top:1px solid #333;padding-left:2px;background:#e2e5ea}
.tabs button{height:14px;border:1px solid #333;border-top:0;padding:0 9px 1px 8px;background:#a9aaaf;line-height:13px}
.tabs .nav{width:16px;padding:0;border:1px solid #999;background:#b5b7bc}
.tabs .m{background:#e2e5ea;margin-left:3px;padding:0 9px 1px}
.tabs .m+button{border-left:0}
.bar{display:flex;height:30px;align-items:center;border-top:1px solid #f4f4f6;border-bottom:1px solid #aaa;padding-left:8px}
.grip{width:3px;height:22px;background:repeating-linear-gradient(#555 0 2px,#fff0 2px 4px);margin-right:6px}
.bar button{width:23px;height:23px}
.bar .on{background:#b0b3b9;border:1px solid #5a5c62;border-left-color:#87898f}
.bar .cur{width:31px}
.bar .arrow{width:10px;border:1px solid #aaa;border-left:0}
.sep{width:1px;height:22px;background:#888;margin:0 4px 0 2px}
.sep.end{height:28px;background:#f8f8fa;margin-left:7px}
</style>
<div class="tabs">${btn('first','第一个','nav')}${btn('prior','上一个','nav')}${btn('next','下一个','nav')}${btn('last','最后','nav')}<button type="button" class="m">模型</button><button type="button">运动算例 1</button></div>
<div class="bar"><i class="grip"></i>${btn('funnelS','切换过滤器','on')}${btn('funnels','清除过滤器')}${btn('funnelsB','所有过滤器')}${btn('cursor','选择','on cur')}${arrow()}${btn('cursorG','放大选择')}<i class="sep"></i>${FILTERS.map((f,i)=>btn('f'+i,'过滤'+f[0],'on')).join('')}<i class="sep end"></i></div>`);

define('sw-status', `<style>
:host{display:flex;position:relative;align-items:center;height:20px;border-top:1px solid #222;background:#dcdfe5;white-space:nowrap;padding:0 0 0 2px}
.name{flex:0 0 453px}.state{width:54px}.edit{width:88px}.unit{width:110px;padding-left:34px}
.ask{width:65px}
.grow{margin-left:auto}
.mark{position:absolute;right:11px;top:3px;color:#fff;-webkit-text-stroke:2px #e83038;paint-order:stroke fill;font:17px/16px "DejaVu Sans","Noto Sans CJK SC",sans-serif}
.mark span{font-size:18px}
</style><span class="name">SolidWorks Premium 2014 x64 版</span><span class="state">欠定义</span><span class="edit">在编辑 草图3</span>${ic('light')}<span class="unit">自定义</span><span class="ask">${ic('ask')}</span>${ic('tag')}<span class="grow">${ic('size')}</span>
<div class="mark"><span>三维网</span>www.3dportal.cn</div>`);

define('sw-window', `<style>
:host{height:100vh;padding:3px 1px 1px;background:linear-gradient(90deg,#0a1f45,#12305c)}
.frame{display:flex;flex-direction:column;height:100%;padding:5px 7px 5px 6px;border:1px solid #b7cfe8;border-radius:7px 7px 5px 5px;
background:linear-gradient(90deg,#2a5c94,#1f4f87 60%,#3a6ea4) 0 0/100% 5px no-repeat,linear-gradient(#a4b4d0,#8da3c8 200px,#1d4f87 206px,#2868a4 480px,#3c9cc8) 0 0/6px 100% no-repeat,linear-gradient(90deg,#58a8cc,#a9cfe9 20%,#c4def2) 0 100%/100% 6px no-repeat,linear-gradient(#aac4e2,#e8f2fa 180px,#9cc4e4 215px,#b4d2ea 480px,#bcd6ee)}
.app{display:flex;flex-direction:column;flex:1;min-height:0;border-top:1px solid #e4eef8;background:#dcdfe5}
</style><div class="frame"><div class="app"><sw-menubar></sw-menubar><sw-ribbon></sw-ribbon><sw-work></sw-work><sw-bottom></sw-bottom><sw-status></sw-status></div></div>`);
</script>
</body>
</html>
